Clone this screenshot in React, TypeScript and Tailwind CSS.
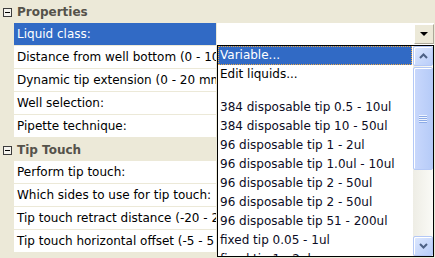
import React from 'react';

type Row =
  | { kind: 'cat'; label: string }
  | { kind: 'prop'; label: string; selected?: boolean; combo?: boolean };

const rows: Row[] = [
  { kind: 'cat', label: 'Properties' },
  { kind: 'prop', label: 'Liquid class:', selected: true, combo: true },
  { kind: 'prop', label: 'Distance from well bottom (0 - 10 mm):' },
  { kind: 'prop', label: 'Dynamic tip extension (0 - 20 mm):' },
  { kind: 'prop', label: 'Well selection:' },
  { kind: 'prop', label: 'Pipette technique:' },
  { kind: 'cat', label: 'Tip Touch' },
  { kind: 'prop', label: 'Perform tip touch:' },
  { kind: 'prop', label: 'Which sides to use for tip touch:' },
  { kind: 'prop', label: 'Tip touch retract distance (-20 - 20 mm):' },
  { kind: 'prop', label: 'Tip touch horizontal offset (-5 - 5 mm):' },
];

const liquids = [
  '384 disposable tip 0.5 - 10ul',
  '384 disposable tip 10 - 50ul',
  '96 disposable tip 1 - 2ul',
  '96 disposable tip 1.0ul - 10ul',
  '96 disposable tip 2 - 50ul',
  '96 disposable tip 2 - 50ul',
  '96 disposable tip 51 - 200ul',
  'fixed tip 0.05 - 1ul',
  'fixed tip 1 - 2ul',
];

const MinusBox = () => (
  <div className="w-[9px] h-[9px] border border-[#3c3c3c] bg-[#f4f3ee] flex items-center justify-center">
    <div className="w-[5px] h-px bg-black" />
  </div>
);

const Chevron = ({ up }: { up?: boolean }) => (
  <svg width="9" height="6" viewBox="0 0 9 6">
    <path
      d={up ? 'M1 5 L4.5 1.5 L8 5' : 'M1 1 L4.5 4.5 L8 1'}
      fill="none"
      stroke="#4d6185"
      strokeWidth="2"
    />
  </svg>
);

const ScrollButton = ({ up }: { up?: boolean }) => (
  <div className="h-[20px] rounded-[2px] border border-[#b4c8f6] bg-gradient-to-br from-[#dde8fe] to-[#b9cdf9] flex items-center justify-center shadow-[inset_1px_1px_0_#ffffff]">
    <Chevron up={up} />
  </div>
);

// open combo list, drawn over the value column
const DropList = () => (
  <div className="absolute left-[217px] top-[45px] w-[217px] h-[212px] border border-black bg-white flex">
    <div className="flex-1 flex flex-col overflow-hidden">
      <div className="h-[19px] shrink-0 pl-[1px] leading-[17px] bg-[#316ac5] text-white border border-dotted border-[#e8a84a] mr-[1px]">
        Variable...
      </div>
      <div className="h-[19px] shrink-0 pl-[2px] leading-[19px]">Edit liquids...</div>
      <div className="h-[14px] shrink-0" />
      {liquids.map((l, i) => (
        <div key={i} className="h-[19px] shrink-0 pl-[2px] leading-[19px] text-[#0c0c24] whitespace-nowrap">
          {l}
        </div>
      ))}
    </div>
    <div className="w-[20px] flex flex-col bg-gradient-to-r from-[#eeede5] to-[#fafaf6]">
      <ScrollButton up />
      <div className="h-[103px] mt-px rounded-[2px] border border-[#b4c8f6] bg-gradient-to-r from-[#c9d8fc] to-[#b6cbf8] shadow-[inset_1px_1px_0_#ffffff] flex flex-col items-center justify-center gap-[1px]">
        {[0, 1, 2, 3].map((k) => (
          <div key={k} className="w-[8px] h-px bg-[#eef4fe] shadow-[0_1px_0_#8caae6]" />
        ))}
      </div>
      <div className="flex-1" />
      <ScrollButton />
    </div>
  </div>
);

export default function App() {
  return (
    <div
      className="relative w-[435px] h-[258px] overflow-hidden bg-[#ece9d8] text-[12px] text-black"
      style={{ fontFamily: '"DejaVu Sans", Verdana, sans-serif' }}
    >
      <div className="flex flex-col mr-[1px]">
        {rows.map((r, i) =>
          r.kind === 'cat' ? (
            <div key={i} className="h-[23px] flex items-center">
              <div className="w-[14px] flex justify-center pl-[1px] pt-[2px]">
                <MinusBox />
              </div>
              <span className="pl-[3px] font-bold text-[#55524a]">{r.label}</span>
            </div>
          ) : (
            <div key={i} className="h-[23px] flex">
              <div className="w-[14px] shrink-0" />
              <div className="flex-1 flex border-b border-[#ece9d8]">
                <div
                  className={`w-[202px] shrink-0 overflow-hidden whitespace-nowrap pl-[3px] leading-[22px] ${
                    r.selected ? 'bg-[#316ac5] text-white' : 'bg-white'
                  }`}
                >
                  {r.label}
                </div>
                <div className="w-px bg-[#ece9d8]" />
                <div className="flex-1 bg-white flex justify-end">
                  {r.combo && (
                    <div className="w-[20px] h-[20px] mt-[1px] bg-[#ece9d8] border-t border-l border-white border-r border-b border-r-[#aca899] border-b-[#aca899] flex items-center justify-center">
                      <div className="w-0 h-0 border-l-[4px] border-r-[4px] border-t-[4px] border-l-transparent border-r-transparent border-t-black" />
                    </div>
                  )}
                </div>
              </div>
            </div>
          )
        )}
      </div>
      <DropList />
    </div>
  );
}
